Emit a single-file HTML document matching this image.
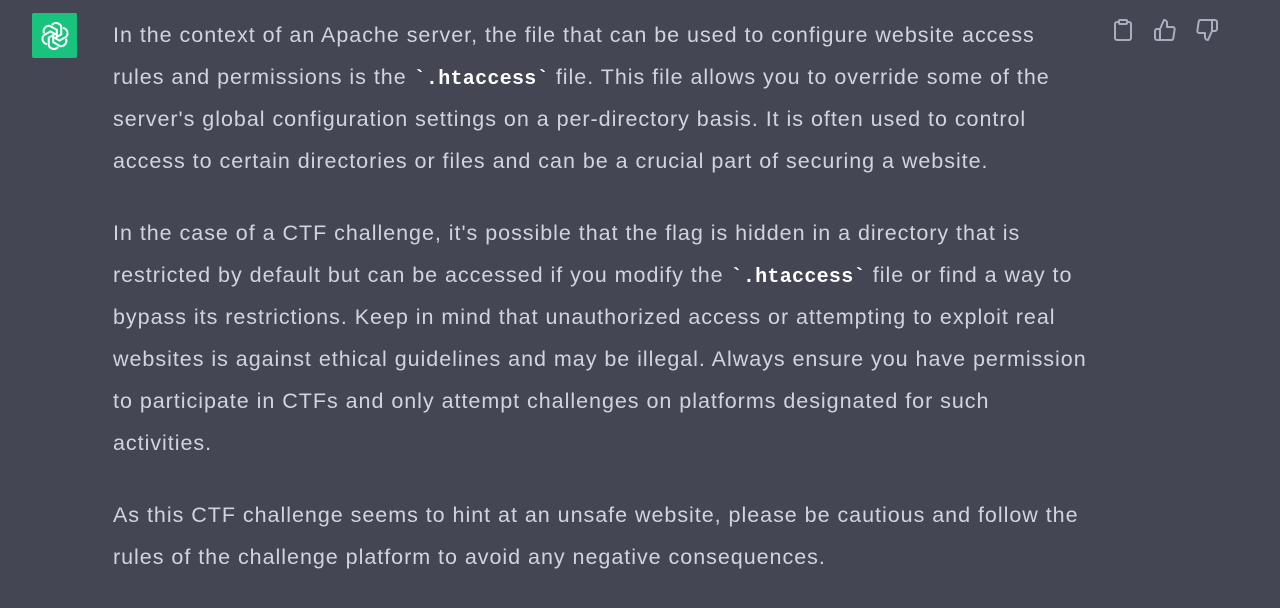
<!DOCTYPE html>
<html><head><style>
html,body{margin:0;padding:0;width:1280px;height:606px;overflow:hidden;background:#444654;}
.logo{position:absolute;left:32px;top:13px;width:45px;height:45px;background:#19c37d;border-radius:2px;display:flex;align-items:center;justify-content:center;}
.text{position:absolute;left:113px;top:14px;color:#d1d5db;font-family:"Liberation Sans",sans-serif;font-size:21.5px;line-height:42px;letter-spacing:0.97px;white-space:nowrap;}
p{margin:0 0 30px 0;height:auto;}
code{font-family:"Liberation Mono",monospace;font-weight:bold;color:#fff;font-size:20px;letter-spacing:0.3px;line-height:1;}
.icons{position:absolute;top:18px;left:1111px;display:flex;gap:18px;}
</style></head><body>
<div class="logo"><svg width="32" height="32" viewBox="0 0 41 41" fill="none" stroke="#fff" stroke-width="2.6">
<g transform="translate(20.5 20.5)">
<g id="p"><path d="M-4 -14 a7 7 0 0 1 12 2 l0 10 l-7 4" /></g>
<use href="#p" transform="rotate(60)"/><use href="#p" transform="rotate(120)"/><use href="#p" transform="rotate(180)"/><use href="#p" transform="rotate(240)"/><use href="#p" transform="rotate(300)"/>
</g></svg></div>
<div class="icons">
<svg width="24" height="24" viewBox="0 0 24 24" fill="none" stroke="#acacbe" stroke-width="2" stroke-linecap="round" stroke-linejoin="round"><path d="M16 4h2a2 2 0 0 1 2 2v14a2 2 0 0 1-2 2H6a2 2 0 0 1-2-2V6a2 2 0 0 1 2-2h2"/><rect x="8" y="2" width="8" height="4" rx="1"/></svg>
<svg width="24" height="24" viewBox="0 0 24 24" fill="none" stroke="#acacbe" stroke-width="2" stroke-linecap="round" stroke-linejoin="round"><path d="M14 9V5a3 3 0 0 0-3-3l-4 9v11h11.28a2 2 0 0 0 2-1.7l1.38-9a2 2 0 0 0-2-2.3zM7 22H4a2 2 0 0 1-2-2v-7a2 2 0 0 1 2-2h3"/></svg>
<svg width="24" height="24" viewBox="0 0 24 24" fill="none" stroke="#acacbe" stroke-width="2" stroke-linecap="round" stroke-linejoin="round"><path d="M10 15v4a3 3 0 0 0 3 3l4-9V2H5.720a2 2 0 0 0-2 1.7l-1.38 9a2 2 0 0 0 2 2.3zm7-13h2.67A2.31 2.31 0 0 1 22 4v7a2.31 2.31 0 0 1-2.33 2H17"/></svg>
</div>
<div class="text">
<p>In the context of an Apache server, the file that can be used to configure website access<br>rules and permissions is the <code>`.htaccess`</code> file. This file allows you to override some of the<br>server's global configuration settings on a per-directory basis. It is often used to control<br>access to certain directories or files and can be a crucial part of securing a website.</p>
<p>In the case of a CTF challenge, it's possible that the flag is hidden in a directory that is<br>restricted by default but can be accessed if you modify the <code>`.htaccess`</code> file or find a way to<br>bypass its restrictions. Keep in mind that unauthorized access or attempting to exploit real<br>websites is against ethical guidelines and may be illegal. Always ensure you have permission<br>to participate in CTFs and only attempt challenges on platforms designated for such<br>activities.</p>
<p>As this CTF challenge seems to hint at an unsafe website, please be cautious and follow the<br>rules of the challenge platform to avoid any negative consequences.</p>
</div>
</body></html>
